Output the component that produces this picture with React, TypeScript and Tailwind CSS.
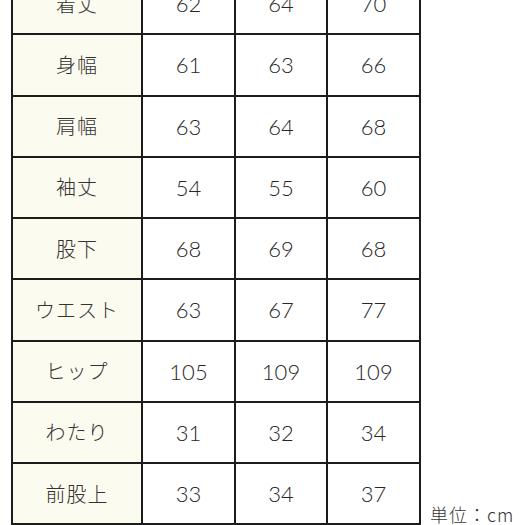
const rows = [
  { label: "着丈", s: 62, m: 64, l: 70 },
  { label: "身幅", s: 61, m: 63, l: 66 },
  { label: "肩幅", s: 63, m: 64, l: 68 },
  { label: "袖丈", s: 54, m: 55, l: 60 },
  { label: "股下", s: 68, m: 69, l: 68 },
  { label: "ウエスト", s: 63, m: 67, l: 77 },
  { label: "ヒップ", s: 105, m: 109, l: 109 },
  { label: "わたり", s: 31, m: 32, l: 34 },
  { label: "前股上", s: 33, m: 34, l: 37 },
];

export default function App() {
  return (
    <div className="h-[525px] w-[525px] overflow-hidden bg-white">
      <div className="flex items-end pl-[11px] mt-[-28px]">
        <div className="grid grid-cols-[128px_91px_90px_91px] auto-rows-[59.25px] gap-[2px] bg-[#1c1c1c] p-[2px] text-[22px] font-light text-[#262626] font-['Lato','Noto_Sans_CJK_JP',sans-serif]">
          {rows.map((row) => (
            <>
              <div key={row.label + "l"} className="flex items-center justify-center bg-[#fcfbf0] font-['Noto_Sans_CJK_JP',sans-serif] font-light text-[20px] text-[#333] tracking-[1px]">
                {row.label}
              </div>
              <div key={row.label + "s"} className="flex items-center justify-center bg-white">{row.s}</div>
              <div key={row.label + "m"} className="flex items-center justify-center bg-white">{row.m}</div>
              <div key={row.label + "x"} className="flex items-center justify-center bg-white">{row.l}</div>
            </>
          ))}
        </div>
        <div className="ml-[9px] mb-[1px] whitespace-nowrap text-[18px] leading-[20px] font-light text-[#333] font-['Noto_Sans_CJK_JP',sans-serif] tracking-[1px]">
          単位：cm
        </div>
      </div>
    </div>
  );
}
